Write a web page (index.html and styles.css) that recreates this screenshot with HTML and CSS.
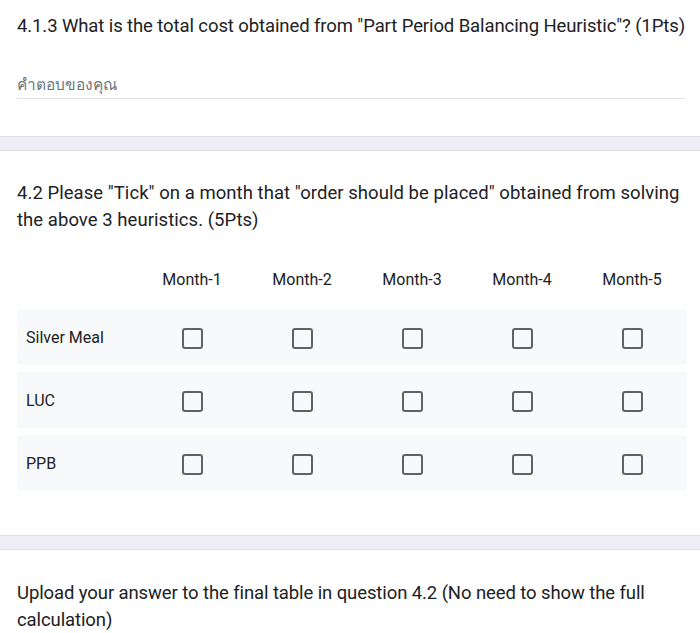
FILE: index.html
```html
<!DOCTYPE html>
<html lang="en">
<head>
<meta charset="utf-8">
<link rel="stylesheet" href="styles.css">
</head>
<body>
<section class="question q1">
  <div class="q-title">4.1.3 What is the total cost obtained from "Part Period Balancing Heuristic"? (1Pts)</div>
  <div class="answer">คำตอบของคุณ</div>
</section>
<div class="band"></div>
<section class="question q2">
  <div class="q-title multi">4.2 Please "Tick" on a month that "order should be placed" obtained from solving the above 3 heuristics. (5Pts)</div>
  <div class="grid">
    <div class="grid-head">
      <div class="cell label"></div>
      <div class="cell">Month-1</div>
      <div class="cell">Month-2</div>
      <div class="cell">Month-3</div>
      <div class="cell">Month-4</div>
      <div class="cell">Month-5</div>
    </div>
    <div class="grid-row">
      <div class="cell label">Silver Meal</div>
      <div class="cell"><span class="box"></span></div>
      <div class="cell"><span class="box"></span></div>
      <div class="cell"><span class="box"></span></div>
      <div class="cell"><span class="box"></span></div>
      <div class="cell"><span class="box"></span></div>
    </div>
    <div class="grid-row">
      <div class="cell label">LUC</div>
      <div class="cell"><span class="box"></span></div>
      <div class="cell"><span class="box"></span></div>
      <div class="cell"><span class="box"></span></div>
      <div class="cell"><span class="box"></span></div>
      <div class="cell"><span class="box"></span></div>
    </div>
    <div class="grid-row">
      <div class="cell label">PPB</div>
      <div class="cell"><span class="box"></span></div>
      <div class="cell"><span class="box"></span></div>
      <div class="cell"><span class="box"></span></div>
      <div class="cell"><span class="box"></span></div>
      <div class="cell"><span class="box"></span></div>
    </div>
  </div>
</section>
<div class="band band2"></div>
<section class="question q3">
  <div class="q-title multi">Upload your answer to the final table in question 4.2 (No need to show the full calculation)</div>
</section>
</body>
</html>
```

FILE: styles.css
```css
* { box-sizing: border-box; }
html, body { margin: 0; padding: 0; background: #ffffff; }
body {
  font-family: Roboto, "Noto Sans", "Liberation Sans", sans-serif;
  color: #202124;
  width: 700px;
  overflow: hidden;
}
.question { padding: 0 13px 0 17px; }
.q1 { padding-top: 14px; }
.q-title {
  font-size: 18.5px;
  line-height: 24px;
  letter-spacing: -0.1px;
  white-space: nowrap;
}
.q-title.multi { white-space: normal; line-height: 27px; }
.q2 .q-title.multi { letter-spacing: 0.05px; }
.q3 .q-title.multi { padding-right: 20px; }
.answer {
  margin-top: 36px;
  margin-right: 2px;
  font-family: "Noto Sans", Roboto, sans-serif;
  font-size: 15.5px;
  line-height: 20px;
  color: #70757a;
  padding-bottom: 4px;
  border-bottom: 1px solid #e0e0e0;
}
.band {
  margin-top: 37px;
  height: 15px;
  background: #efedf8;
  border-top: 1px solid #dedce6;
  border-bottom: 1px solid #dedce6;
}
.band2 { margin-top: 44px; }
.q2 { padding-top: 29px; }
.grid { margin-top: 25px; width: 670px; }
.grid-head, .grid-row {
  display: grid;
  grid-template-columns: 120px repeat(5, 110px);
  align-items: center;
}
.grid-head { height: 40px; font-size: 16px; margin-bottom: 10px; }
.grid-head .cell { text-align: center; }
.grid-row {
  height: 56px;
  background: #f8f9fa;
  margin-bottom: 7px;
  border-radius: 2px;
}
.grid-row:last-child { margin-bottom: 0; }
.cell { display: flex; justify-content: center; align-items: center; }
.cell.label {
  justify-content: flex-start;
  padding-left: 9px;
  font-size: 16px;
}
.box {
  display: block;
  width: 21px;
  height: 21px;
  border: 2px solid #5f6368;
  border-radius: 3px;
  margin-top: 2px;
}
.q3 { padding-top: 30px; }
```
